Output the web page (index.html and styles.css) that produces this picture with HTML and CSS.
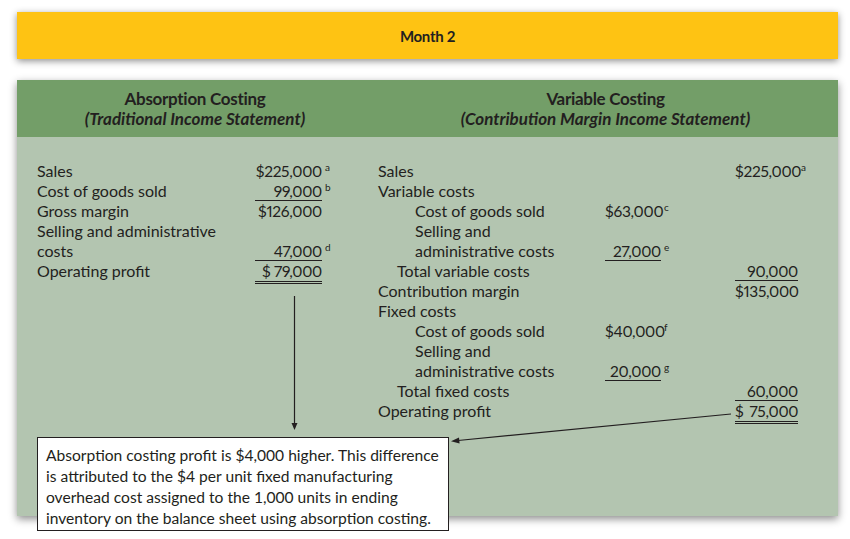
FILE: index.html
```html
<!DOCTYPE html>
<html>
<head>
<meta charset="utf-8">
<link rel="stylesheet" href="styles.css">
</head>
<body>
<div class="page">
  <div class="banner">Month 2</div>
  <div class="panel">
    <div class="panel-head">
      <div class="head-col head-left">
        <div class="title">Absorption Costing</div>
        <div class="subtitle">(Traditional Income Statement)</div>
      </div>
      <div class="head-col head-right">
        <div class="title">Variable Costing</div>
        <div class="subtitle">(Contribution Margin Income Statement)</div>
      </div>
    </div>
    <div class="panel-body">
      <div class="stmt stmt-left">
        <div class="lbl">Sales</div><div class="num">$225,000</div><div class="sup">a</div>
        <div class="lbl">Cost of goods sold</div><div class="num ul">99,000</div><div class="sup">b</div>
        <div class="lbl">Gross margin</div><div class="num">$126,000</div><div class="sup"></div>
        <div class="lbl">Selling and administrative</div><div class="num"></div><div class="sup"></div>
        <div class="lbl">costs</div><div class="num ul">47,000</div><div class="sup">d</div>
        <div class="lbl">Operating profit</div><div class="num dbl">$ 79,000</div><div class="sup"></div>
      </div>
      <div class="stmt stmt-right">
        <div class="lbl">Sales</div><div class="num"></div><div class="sup"></div><div class="num">$225,000</div><div class="sup">a</div>
        <div class="lbl">Variable costs</div><div class="num"></div><div class="sup"></div><div class="num"></div><div class="sup"></div>
        <div class="lbl in2">Cost of goods sold</div><div class="num">$63,000</div><div class="sup">c</div><div class="num"></div><div class="sup"></div>
        <div class="lbl in2">Selling and</div><div class="num"></div><div class="sup"></div><div class="num"></div><div class="sup"></div>
        <div class="lbl in2">administrative costs</div><div class="num ul">27,000</div><div class="sup">e</div><div class="num"></div><div class="sup"></div>
        <div class="lbl in1">Total variable costs</div><div class="num"></div><div class="sup"></div><div class="num ul">90,000</div><div class="sup"></div>
        <div class="lbl">Contribution margin</div><div class="num"></div><div class="sup"></div><div class="num">$135,000</div><div class="sup"></div>
        <div class="lbl">Fixed costs</div><div class="num"></div><div class="sup"></div><div class="num"></div><div class="sup"></div>
        <div class="lbl in2">Cost of goods sold</div><div class="num">$40,000</div><div class="sup">f</div><div class="num"></div><div class="sup"></div>
        <div class="lbl in2">Selling and</div><div class="num"></div><div class="sup"></div><div class="num"></div><div class="sup"></div>
        <div class="lbl in2">administrative costs</div><div class="num ul">20,000</div><div class="sup">g</div><div class="num"></div><div class="sup"></div>
        <div class="lbl in1">Total fixed costs</div><div class="num"></div><div class="sup"></div><div class="num ul">60,000</div><div class="sup"></div>
        <div class="lbl">Operating profit</div><div class="num"></div><div class="sup"></div><div class="num dbl"><span class="dollar">$</span>75,000</div><div class="sup"></div>
      </div>
    </div>
  </div>
  <svg class="arrows" width="850" height="539" viewBox="0 0 850 539">
    <line x1="294.5" y1="296" x2="294.5" y2="424" stroke="#231f20" stroke-width="1.2"/>
    <polygon points="291.5,423 297.5,423 294.5,430" fill="#231f20"/>
    <line x1="731" y1="414" x2="458" y2="440.5" stroke="#231f20" stroke-width="1.2"/>
    <polygon points="451,441.2 459,437.5 459.6,443.5" fill="#231f20"/>
  </svg>
  <div class="callout">Absorption costing profit is $4,000 higher. This difference<br>is attributed to the $4 per unit fixed manufacturing<br>overhead cost assigned to the 1,000 units in ending<br>inventory on the balance sheet using absorption costing.</div>
</div>
</body>
</html>
```
FILE: styles.css
```css
* { box-sizing: border-box; }
html, body { margin: 0; padding: 0; background: #ffffff; }
body {
  width: 850px;
  height: 539px;
  overflow: hidden;
  font-family: Lato, "Open Sans", sans-serif;
  color: #231f20;
}
.page {
  position: relative;
  width: 850px;
  height: 539px;
  padding: 12px 12px 0 17px;
}
.banner {
  width: 821px;
  height: 47px;
  background: #fec313;
  box-shadow: 0 2px 7px rgba(0,0,0,0.45);
  display: flex;
  align-items: center;
  justify-content: center;
  font-weight: 700;
  font-size: 15px;
  letter-spacing: -0.3px;
  color: #231f20;
  padding-top: 1px;
}
.panel {
  margin-top: 21px;
  width: 821px;
  height: 436px;
  background: #b3c5b0;
  box-shadow: 0 3px 8px rgba(0,0,0,0.45);
}
.panel-head {
  height: 57px;
  background: #739e68;
  display: grid;
  grid-template-columns: 356px 1fr;
  padding-top: 9px;
}
.head-col {
  text-align: center;
  line-height: 20px;
  font-weight: 700;
  font-size: 17px;
  letter-spacing: -0.3px;
}
.subtitle { font-style: italic; letter-spacing: 0; }
.panel-body {
  display: flex;
  align-items: flex-start;
  padding: 24px 0 0 20px;
  font-size: 16px;
  line-height: 20px;
}
.stmt { display: grid; }
.stmt-left {
  grid-template-columns: 218px 67px 10px;
}
.stmt-right {
  margin-left: 46px;
  grid-template-columns: 227px 56px 74px 63px 10px;
}
.lbl { white-space: nowrap; height: 20px; }
.in1 { padding-left: 19px; }
.in2 { padding-left: 37px; }
.num {
  text-align: right;
  height: 20px;
  white-space: nowrap;
  font-size: 15.5px;
  letter-spacing: -0.3px;
  font-variant-numeric: proportional-nums;
}
.sup {
  font-size: 10px;
  line-height: 12px;
  padding-left: 3px;
  height: 20px;
}
.ul { box-shadow: inset 0 -1px 0 #231f20; }
.dbl { border-bottom: 3px double #231f20; height: 23px; }
.dollar { margin-right: 6px; }
.arrows {
  position: absolute;
  left: 0;
  top: 0;
  pointer-events: none;
}
.callout {
  position: absolute;
  left: 37px;
  top: 437px;
  width: 412px;
  height: 94px;
  background: #ffffff;
  border: 1px solid #231f20;
  padding: 7px 4px 0 8px;
  font-size: 15.6px;
  line-height: 21px;
  white-space: nowrap;
  color: #231f20;
}
```
